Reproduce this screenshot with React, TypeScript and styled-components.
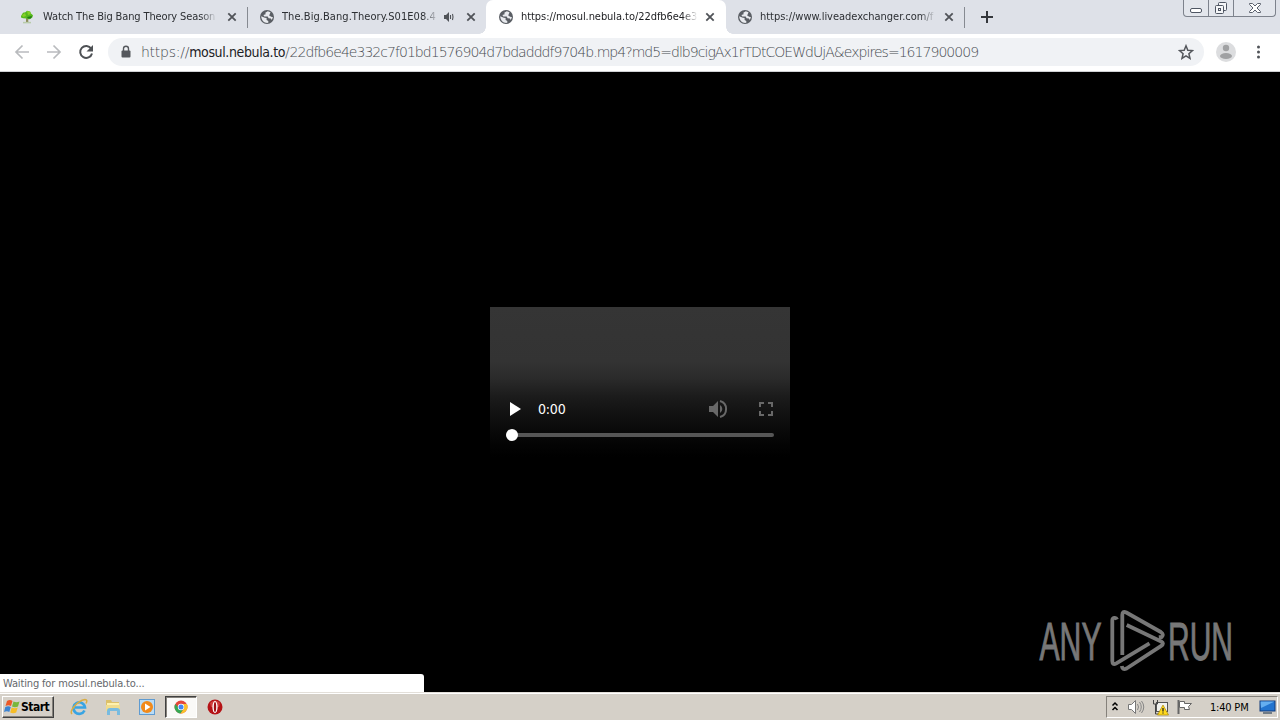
import React from "react";
import styled, { createGlobalStyle, css } from "styled-components";

const Global = createGlobalStyle`
  *{box-sizing:border-box}
  html,body{margin:0;padding:0;background:#000;overflow:hidden}
  svg{display:block;flex:none}
`;
const ui = '"DejaVu Sans Condensed","DejaVu Sans",sans-serif';

const Screen = styled.div`
  width:1280px;height:720px;display:flex;flex-direction:column;
  font-family:${ui};background:#000;
`;
const TabStrip = styled.div`
  position:relative;height:34px;flex:none;display:flex;background:#dee1e8;
`;
const Tab = styled.div<{ $w: number; $pad: number; $active?: boolean; $line?: boolean }>`
  position:relative;width:${p => p.$w}px;height:34px;display:flex;align-items:center;
  padding:0 ${p => (p.$active ? 10 : 9)}px 0 ${p => p.$pad}px;color:${p => (p.$active ? "#1c1d20" : "#2c2f33")};
  ${p => p.$active && css`
    background:#fff;border-radius:7px 7px 0 0;
    &::before,&::after{content:"";position:absolute;bottom:0;width:7px;height:7px}
    &::before{left:-7px;background:radial-gradient(circle at 0 0,transparent 6.5px,#fff 7px)}
    &::after{right:-7px;background:radial-gradient(circle at 100% 0,transparent 6.5px,#fff 7px)}
  `}
  ${p => p.$line && css`border-right:1px solid #868a91;border-image:linear-gradient(transparent 8px,#868a91 8px,#868a91 27px,transparent 27px) 1;`}
`;
const TabTitle = styled.span<{ $w: number; $ls: number; $gap: number }>`
  width:${p => p.$w}px;margin-left:${p => p.$gap}px;font-size:11px;line-height:16px;white-space:nowrap;
  letter-spacing:${p => p.$ls}px;
  mask-image:linear-gradient(90deg,#000 calc(100% - 16px),transparent);
`;
const Spacer = styled.div`flex:1;`;
const AudioSlot = styled.div`margin-right:10px;`;
const NewTab = styled.div`padding:11px 0 0 16px;`;
const WindowButtons = styled.div`
  position:absolute;right:4px;top:0;width:93px;height:17px;display:flex;
  border:1px solid #7d828c;border-top:0;border-radius:0 0 4px 4px;background:#e3e6ec;
`;
const WindowButton = styled.div<{ $w: number }>`
  width:${p => p.$w}px;height:16px;display:flex;justify-content:center;
  & + &{border-left:1px solid #7d828c}
`;
const Toolbar = styled.div`
  height:38px;flex:none;display:flex;align-items:center;background:#fff;border-bottom:1px solid #cfd1d4;padding:0 12px 1px 14px;
`;
const NavIcons = styled.div`display:flex;gap:16px;`;
const Omnibox = styled.div`
  width:1096px;height:28px;margin-left:14px;padding:0 10px 0 12px;border-radius:14px;background:#f0f2f5;display:flex;align-items:center;
`;
const Url = styled.div`
  margin-left:9px;font-family:"DejaVu Sans ExtraLight","DejaVu Sans Light",${ui};font-weight:200;
  font-size:14px;line-height:20px;color:#474b50;white-space:nowrap;letter-spacing:-0.25px;
`;
const Host = styled.span`font-family:${ui};color:#202124;font-weight:400;letter-spacing:-0.38px;`;
const Path = styled.span`letter-spacing:-0.96px;`;
const Avatar = styled.div`margin:0 14px 0 12px;`;
const Page = styled.main`
  position:relative;flex:1;display:flex;justify-content:center;align-items:flex-start;padding-top:235px;background:#000;
`;
const Video = styled.div`
  width:300px;height:150px;background:linear-gradient(#353535 0,#333 54px,#2a2a2a 72px,#1b1b1b 90px,#0f0f0f 112px,#040404 136px,#000 150px);
  padding:92px 16px 0;
`;
const Controls = styled.div`height:20px;display:flex;align-items:center;`;
const Time = styled.span`margin-left:17px;font-size:14px;letter-spacing:-.2px;color:#fff;line-height:20px;flex:1;`;
const Track = styled.div`height:4px;margin-top:14px;border-radius:2px;background:#565656;`;
const Thumb = styled.div`position:relative;top:-4px;width:12px;height:12px;border-radius:50%;background:#fff;`;
const Watermark = styled.div`position:absolute;left:1030px;top:532px;`;
const Status = styled.div`
  position:absolute;left:0;bottom:0;width:424px;height:18px;padding-left:3px;background:#fff;border-radius:0 3px 0 0;
  font-size:11px;line-height:19px;color:#65686c;letter-spacing:-.15px;
`;
const Taskbar = styled.footer`
  height:28px;flex:none;display:flex;background:#d5d0c8;border-top:1px solid #e3dfd9;box-shadow:inset 0 1px #fff;padding:3px 2px 0;
`;
const Start = styled.div`
  width:52px;height:22px;display:flex;align-items:center;padding-left:1px;
  background:#d5d0c8;border:1px solid;border-color:#fff #404040 #404040 #fff;box-shadow:inset -1px -1px #85817b;
  font-size:12px;font-weight:700;letter-spacing:-.5px;color:#000;
`;
const Quick = styled.div`display:flex;margin-left:8px;`;
const QuickItem = styled.div<{ $pressed?: boolean }>`
  width:34px;height:22px;display:flex;align-items:center;justify-content:center;
  ${p => p.$pressed && css`width:32px;margin:0 1px 0 1px;background:#faf9f7;border:1px solid;border-color:#404040 #fff #fff #404040;box-shadow:inset 1px 1px #85817b;`}
`;
const Tray = styled.div`
  width:172px;height:22px;display:flex;align-items:center;border:1px solid;border-color:#85817b #fff #fff #85817b;padding-left:4px;
`;
const TrayIcons = styled.div`display:flex;align-items:center;gap:7px;`;
const Clock = styled.span`margin-left:17px;width:50px;white-space:nowrap;font-size:11px;letter-spacing:-.2px;color:#000;`;

const Globe = () => (
  <svg width="16" height="16" viewBox="0 0 16 16">
    <circle cx="8" cy="8" r="7" fill="#5a5e64" />
    <path d="M2.2 7.2 5.8 8.8 7.6 9v2l1.7 1v1.8C6 14.5 2.4 12 2.2 7.2ZM8.8 2.2 6.3 3.7 6.7 5.2 4.4 6.1 5.3 7.6 8.7 7.6 9.6 9.3 11.9 9.4 12.7 11.1 14 8.2 12.2 7.7 10.2 6.6 11 4.6 11.5 3.3Z" fill="#e8eaee" />
  </svg>
);
const Tree = () => (
  <svg width="16" height="16" viewBox="0 0 16 16">
    <path d="M7 9h2l.4 4H7Z" fill="#8b8c5a" /><path d="M4 13.6h8" stroke="#b8cba9" strokeWidth="1.5" />
    <path d="M2 7 4 3.7 6.4 3.2 8 1.7 11.2 2.5 12 4.5 14 6.2 13.3 8.5 10 10.4 7.5 9.5 4 9.3 2 8.5Z" fill="#55b91c" />
    <path d="M8 2 11 3l1 2-3 1ZM3 6l3-2 1 3-3 1Z" fill="#87cf27" /><path d="m8 8 5-1-1 2.5H9Z" fill="#237d16" />
  </svg>
);
const Close = () => (
  <svg width="12" height="12" viewBox="0 0 12 12"><path d="m2.3 2.3 7.4 7.4m0-7.4L2.3 9.7" stroke="#505358" strokeWidth="1.8" /></svg>
);
const TabAudio = () => (
  <svg width="12" height="12" viewBox="0 0 12 12">
    <path d="M1 4h2l3-3v10L3 8H1Z" fill="#505358" /><path d="M7.5 4v4M9.5 3q1 3 0 6" fill="none" stroke="#505358" strokeWidth="1.1" />
  </svg>
);

const tabs = [
  { t: "Watch The Big Bang Theory Season", w: 248, tw: 174, pad: 19, gap: 8, ls: -0.13, line: true },
  { t: "The.Big.Bang.Theory.S01E08.4", w: 238, tw: 157, pad: 11, gap: 7, ls: 0.06, audio: true },
  { t: "https://mosul.nebula.to/22dfb6e4e3", w: 240, tw: 177, pad: 12, gap: 7, ls: -0.06, active: true },
  { t: "https://www.liveadexchanger.com/f", w: 239, tw: 176, pad: 11, gap: 7, ls: -0.02, line: true },
];

export default function App() {
  return (
    <Screen>
      <Global />
      <TabStrip>
        {tabs.map((x, i) => (
          <Tab key={x.t} $w={x.w} $pad={x.pad} $active={x.active} $line={x.line}>
            {i === 0 ? <Tree /> : <Globe />}
            <TabTitle $w={x.tw} $ls={x.ls} $gap={x.gap}>{x.t}</TabTitle>
            <Spacer />
            {x.audio && <AudioSlot><TabAudio /></AudioSlot>}
            <Close />
          </Tab>
        ))}
        <NewTab>
          <svg width="12" height="12" viewBox="0 0 12 12"><path d="M6 0v12M0 6h12" stroke="#34373c" strokeWidth="2" /></svg>
        </NewTab>
        <WindowButtons>
          <WindowButton $w={24}>
            <svg width="14" height="16" viewBox="0 0 14 16"><rect x="1.5" y="8.5" width="11" height="4" rx="1.5" fill="#fff" stroke="#4f5663" /></svg>
          </WindowButton>
          <WindowButton $w={25}>
            <svg width="14" height="16" viewBox="0 0 14 16" fill="#f5f6f8" stroke="#4f5663"><rect x="4.5" y="2.5" width="8" height="8" rx="1" /><rect x="1.5" y="5.5" width="8" height="8" rx="1" /><rect x="4.5" y="8.5" width="2" height="2" /></svg>
          </WindowButton>
          <WindowButton $w={42}>
            <svg width="14" height="16" viewBox="0 0 14 16"><path d="M1.5 3.5h3L7 6l2.5-2.5h3v1L9 8l3.5 3.5v1h-3L7 10l-2.5 2.5h-3v-1L5 8 1.5 4.5Z" fill="#fff" stroke="#5b616d" /></svg>
          </WindowButton>
        </WindowButtons>
      </TabStrip>
      <Toolbar>
        <NavIcons>
          <svg width="16" height="16" viewBox="0 0 16 16" fill="none" stroke="#b9bbbe" strokeWidth="1.7"><path d="M15 8H2m6.5-6.5L2 8l6.5 6.5" /></svg>
          <svg width="16" height="16" viewBox="0 0 16 16" fill="none" stroke="#b9bbbe" strokeWidth="1.7"><path d="M1 8h13M7.5 1.5 14 8l-6.5 6.5" /></svg>
          <svg width="16" height="16" viewBox="0 0 16 16"><path d="M13.2 4.6A6 6 0 1 0 14 9.5" fill="none" stroke="#4e5155" strokeWidth="2" /><path d="M15 1v6.5H8.5Z" fill="#4e5155" /></svg>
        </NavIcons>
        <Omnibox>
          <svg width="12" height="14" viewBox="0 0 12 14"><rect x="1.5" y="5.5" width="9" height="7" rx="1" fill="#55585d" /><path d="M3.5 6V3.8a2.5 2.5 0 0 1 5 0V6" fill="none" stroke="#55585d" strokeWidth="1.4" /></svg>
          <Url>https://<Host>mosul.nebula.to</Host>/<Path>22dfb6e4e332c7f01bd1576904d7bdadddf9704b.mp4?md5=dlb9cigAx1rTDtCOEWdUjA&amp;expires=1617900009</Path></Url>
          <Spacer />
          <svg width="16" height="16" viewBox="0 0 16 16"><path d="m8 1.8 1.8 4.4 4.7.4-3.6 3.1 1.1 4.6L8 11.8l-4 2.5 1.1-4.6L1.5 6.600l4.700-.4Z" fill="none" stroke="#54575c" strokeWidth="1.5" /></svg>
        </Omnibox>
        <Avatar>
          <svg width="20" height="20" viewBox="0 0 20 20"><circle cx="10" cy="10" r="10" fill="#dcdddf" /><circle cx="10" cy="6" r="3.2" fill="#a0a1a3" /><ellipse cx="10" cy="14" rx="6" ry="3" fill="#a0a1a3" /></svg>
        </Avatar>
        <svg width="16" height="16" viewBox="0 0 16 16" fill="#505358"><circle cx="8.5" cy="3" r="1.5" /><circle cx="8.5" cy="8" r="1.5" /><circle cx="8.5" cy="13" r="1.5" /></svg>
      </Toolbar>
      <Page>
        <Video>
          <Controls>
            <svg width="15" height="16" viewBox="0 0 15 16"><path d="M4 1v14L15 8Z" fill="#fff" /></svg>
            <Time>0:00</Time>
            <svg width="20" height="20" viewBox="0 0 20 20"><path d="M1 7h4l5-5v16l-5-5H1Z" fill="#686868" /><path d="M12 6a4.6 4.6 0 0 1 0 8Z" fill="#686868" /><path d="M12 2a8.3 8.3 0 0 1 0 16" fill="none" stroke="#686868" strokeWidth="2" /></svg>
            <svg width="46" height="20" viewBox="0 0 46 20"><path d="M32 8V4h4m4 0h4v4m0 4v4h-4m-4 0h-4v-4" fill="none" stroke="#686868" strokeWidth="2" /></svg>
          </Controls>
          <Track><Thumb /></Track>
        </Video>
        <Watermark>
          <svg width="240" height="80" viewBox="0 0 240 80">
            <g fill="#777" stroke="#777" strokeWidth="1" fontFamily="'Liberation Sans Narrow','Liberation Sans',sans-serif" fontSize="54">
              <text x="9.5" y="55.5" textLength="62" lengthAdjust="spacingAndGlyphs">ANY</text>
              <text x="138" y="55.5" textLength="65" lengthAdjust="spacingAndGlyphs">RUN</text>
            </g>
            <g fill="none" stroke="#777" strokeWidth="3.8" strokeLinejoin="round">
              <path d="M87 15.5c-1-2.500-4.700-2-4.700 1V57q0 4.500 4 2.300L119.500 39.300" />
              <path d="M92.300 51V11q0-4.500 4-2.500l34.500 19.500q3.500 2.500 1 5l-3 .2" />
              <path d="M96.700 21l34.500 16.500q3.500 2 0 4.300L96.500 64.500q-4 2-4.700-2.500" />
            </g>
          </svg>
        </Watermark>
        <Status>Waiting for mosul.nebula.to...</Status>
      </Page>
      <Taskbar>
        <Start>
          <svg width="17" height="16" viewBox="0 0 17 16"><path d="M3 2q3-2 5.500 0L7 7Q4.500 5.500 1.500 7Z" fill="#ed5928" /><path d="M9.500 2.500q3 1.500 6 0l-1.500 5q-3 1.300-6 0Z" fill="#79b73c" /><path d="M1.300 8q3-1.500 5.500 0l-1.500 5Q3 11.500 0 13Z" fill="#3d84d2" /><path d="M7.700 8.500q3 1.300 6 0l-1.500 5q-3 1.300-6 0Z" fill="#f6bd27" /></svg>
          Start
        </Start>
        <Quick>
          <QuickItem>
            <svg width="18" height="18" viewBox="0 0 18 18"><path d="M14.500 12.500A5.800 5.800 0 1 1 15 9.500H5" fill="none" stroke="#38a4e3" strokeWidth="2.6" /><path d="M2 16C-1 13 7 3 15 1.500q3 0 1 4" fill="none" stroke="#d9ad43" strokeWidth="1.5" /></svg>
          </QuickItem>
          <QuickItem>
            <svg width="18" height="18" viewBox="0 0 18 18"><path d="M2 2h5l1 2h7v9H2Z" fill="#dcc06a" /><path d="M3 5h12v6H3Z" fill="#fff1ad" /><path d="M2 7h14v6H2Z" fill="#f0dc8e" /><path d="M3 17v-4q0-3 3-3h7q3 0 3 3v4h-3v-4H6v4Z" fill="#78bbe0" /></svg>
          </QuickItem>
          <QuickItem>
            <svg width="18" height="18" viewBox="0 0 18 18"><rect x="1.5" y="1.5" width="15" height="15" fill="#b9dcf6" stroke="#5f9bd1" /><circle cx="9" cy="9" r="6" fill="#f18a1b" /><path d="M7 5.500v7l5.500-3.500Z" fill="#fff" /></svg>
          </QuickItem>
          <QuickItem $pressed>
            <svg width="14" height="14" viewBox="0 0 14 14"><circle cx="7" cy="7" r="6.5" fill="#e5473a" /><path d="M1.300 3.900A6.500 6.500 0 0 0 6.500 13.500L10 8.500 7 7H4Z" fill="#35a853" /><path d="M7 4h5.800a6.500 6.500 0 0 1-6.300 9.500L10 8.500Z" fill="#fbc02c" /><circle cx="7" cy="7" r="3.2" fill="#fff" /><circle cx="7" cy="7" r="2.5" fill="#4285f4" /></svg>
          </QuickItem>
          <QuickItem>
            <svg width="16" height="16" viewBox="0 0 16 16"><circle cx="8" cy="8" r="7.5" fill="#b51216" /><path d="M3 4q5-5 10 0l-1 4H4Z" fill="#d0403f" /><ellipse cx="8" cy="8" rx="2.6" ry="6" fill="#fff" /><ellipse cx="8" cy="8" rx="1.2" ry="5" fill="#a00f14" /></svg>
          </QuickItem>
        </Quick>
        <Spacer />
        <Tray>
          <TrayIcons>
            <svg width="8" height="12" viewBox="0 0 8 12" fill="none" stroke="#000" strokeWidth="1.5"><path d="m1.500 4.500 2.500-2.500 2.500 2.500M1.500 9l2.500-2.500 2.500 2.500" /></svg>
            <svg width="19" height="16" viewBox="0 0 19 16"><path d="M2.500 5.500h3l4-4v13l-4-4h-3Z" fill="#fff" stroke="#777" /><path d="M11.500 5q2 3 0 6m2-8q3.500 5 0 10m2-11q4.500 6 0 12" fill="none" stroke="#858585" /></svg>
            <svg width="17" height="17" viewBox="0 0 17 17"><rect x="4.5" y="3.5" width="11" height="9" fill="#f1f1ee" stroke="#555" /><path d="M1.500 1v4h4V1m-2 4v10h5" fill="none" stroke="#444" /><path d="m11 6 5.500 10h-11Z" fill="#ffd91d" stroke="#a98700" strokeWidth=".7" /><path d="M11 9v3.500m0 1v1" stroke="#222" strokeWidth="1.3" /></svg>
            <svg width="17" height="16" viewBox="0 0 17 16"><path d="M2.500 1v14" stroke="#666" strokeWidth="2" /><path d="M3.500 2.500h5v2h7l-3 3 1 3h-5v-2h-5Z" fill="#fff" stroke="#666" /></svg>
          </TrayIcons>
          <Clock>1:40 PM</Clock>
          <Spacer />
          <svg width="19" height="16" viewBox="0 0 19 16"><rect x="2" y="2" width="15" height="10" fill="#2374cf" stroke="#123b7b" /><path d="M2.500 2.500h14L3 9Z" fill="#65aef0" /><path d="M5 14h9" stroke="#506070" strokeWidth="1.5" /></svg>
        </Tray>
      </Taskbar>
    </Screen>
  );
}
